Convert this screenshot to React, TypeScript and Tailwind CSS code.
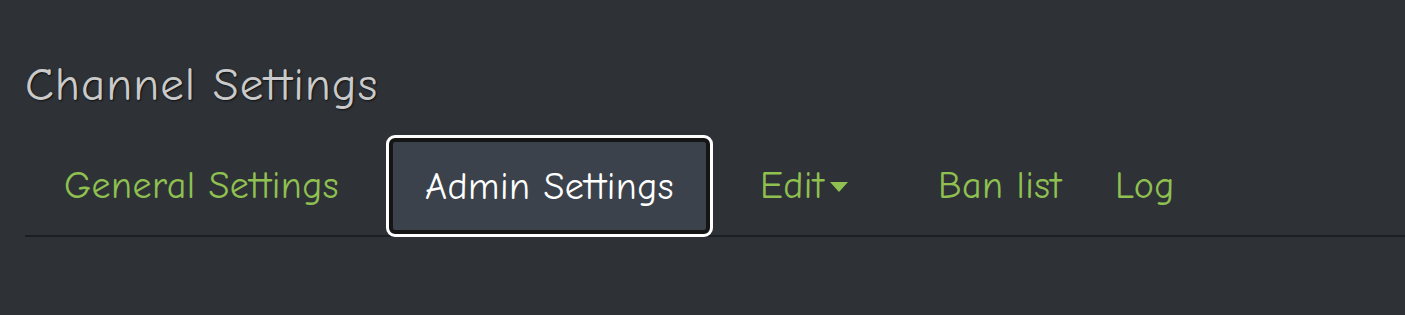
import React, { useState } from 'react'

const tabs = [
  { label: 'General Settings', width: 'w-[353px]' },
  { label: 'Admin Settings', width: 'w-[327px]' },
  { label: 'Edit', width: 'w-[178px]' },
  { label: 'Ban list', width: 'w-[177px]' },
  { label: 'Log', width: 'w-[120px]' },
]

const font = {
  fontFamily: '"Comic Sans MS", "Comic Neue", "Open Sans", sans-serif',
}

const Caret = () => (
  <svg width="18" height="11" viewBox="0 0 18 11" className="ml-[6px] mt-[2px]">
    <path d="M0 0 H18 L9 10 Z" fill="#8fc050" />
  </svg>
)

const App = () => {
  const [active, setActive] = useState('Admin Settings')

  return (
    <div
      className="h-[315px] w-full overflow-hidden bg-[#2e3237] pl-[25px] pt-[54px]"
      style={font}
    >
      <h1 className="text-[47px] leading-[62px] tracking-[1px] text-[#cacaca] [text-shadow:1px_1px_2px_#111]">
        Channel Settings
      </h1>
      <ul className="mt-[19px] flex h-[102px] items-stretch border-b-2 border-[#1b1e22]">
        {tabs.map((tab) => {
          const isActive = tab.label === active
          return (
            <li
              key={tab.label}
              onClick={() => setActive(tab.label)}
              className={
                isActive
                  ? `-mb-[2px] mx-[8px] flex shrink-0 cursor-pointer items-center justify-center rounded-[9px] border-[3px] border-white bg-[#3c424b] pt-[3px] text-[38px] tracking-[0.4px] text-white [box-shadow:inset_0_0_0_4px_#151515] ${tab.width}`
                  : `flex shrink-0 cursor-pointer items-center pl-[39px] pt-[3px] text-[38px] tracking-[0.4px] text-[#8fc050] ${tab.width}`
              }
            >
              <span className="flex items-center whitespace-nowrap">
                {tab.label}
                {tab.label === 'Edit' && <Caret />}
              </span>
            </li>
          )
        })}
      </ul>
    </div>
  )
}

export default App
